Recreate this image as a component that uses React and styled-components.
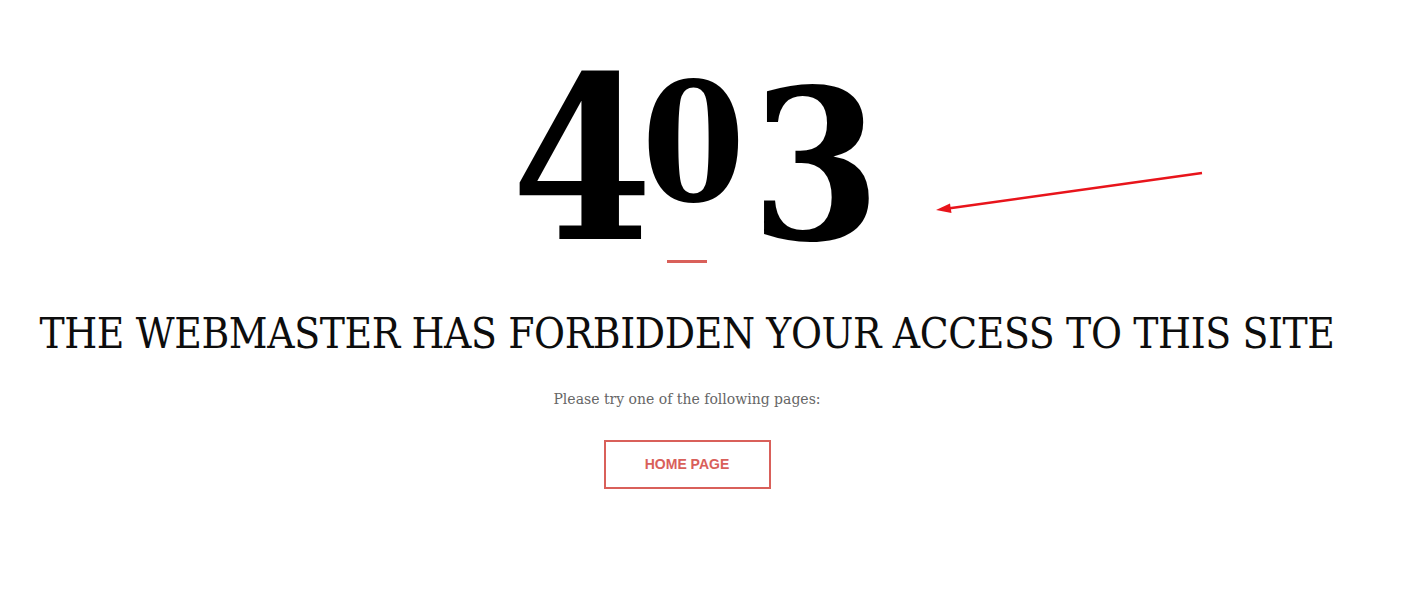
import React from "react";
import styled, { createGlobalStyle } from "styled-components";

const GlobalStyle = createGlobalStyle`
  html, body {
    margin: 0;
    padding: 0;
    background: #ffffff;
  }
`;

const Page = styled.div`
  position: relative;
  width: 1374px;
  height: 593px;
  display: flex;
  flex-direction: column;
  align-items: center;
  padding-top: 75px;
  box-sizing: border-box;
  font-family: "DejaVu Serif", "Liberation Serif", serif;
`;

const Code = styled.div`
  display: flex;
  align-items: flex-start;
  margin-left: 18px;
`;

const Digit = styled.span`
  font-family: "DejaVu Serif", serif;
  font-stretch: condensed;
  font-weight: 700;
  color: #000;
  font-size: ${(props) => props.$size}px;
  line-height: 0.75;
  margin-top: ${(props) => props.$drop || 0}px;
  margin-left: ${(props) => props.$gap || 0}px;
`;

const Divider = styled.div`
  width: 40px;
  height: 3px;
  margin-top: 15px;
  background: #d9605a;
`;

const Title = styled.h1`
  margin: 46px 0 0;
  font-family: "DejaVu Serif", serif;
  font-stretch: condensed;
  font-weight: 400;
  font-size: 42px;
  letter-spacing: -0.35px;
  line-height: 1.2;
  color: #0d0d0d;
  text-transform: uppercase;
  white-space: nowrap;
`;

const Hint = styled.p`
  margin: 32px 0 0;
  font-family: "DejaVu Serif", serif;
  font-size: 14px;
  color: #666666;
`;

const HomeButton = styled.a`
  display: block;
  margin-top: 33px;
  width: 167px;
  height: 49px;
  box-sizing: border-box;
  border: 2px solid #d9605a;
  color: #d9605a;
  font-family: "Liberation Sans", Arial, sans-serif;
  font-weight: 700;
  font-size: 14px;
  line-height: 45px;
  text-align: center;
  text-decoration: none;
  text-transform: uppercase;
`;

const Arrow = styled.svg`
  position: absolute;
  left: 930px;
  top: 165px;
`;

export default function App() {
  return (
    <Page>
      <GlobalStyle />
      <Code>
        <Digit $size={226}>4</Digit>
        <Digit $size={165} $drop={7} $gap={-11}>0</Digit>
        <Digit $size={207} $drop={14} $gap={6}>3</Digit>
      </Code>
      <Divider />
      <Title>The webmaster has forbidden your access to this site</Title>
      <Hint>Please try one of the following pages:</Hint>
      <HomeButton href="#">Home page</HomeButton>
      <Arrow width="280" height="55" viewBox="0 0 280 55">
        <line x1="272" y1="8" x2="18" y2="43.5" stroke="#e8141b" strokeWidth="2.6" />
        <polygon points="6,45 20,38.5 21.5,48" fill="#e8141b" />
      </Arrow>
    </Page>
  );
}
